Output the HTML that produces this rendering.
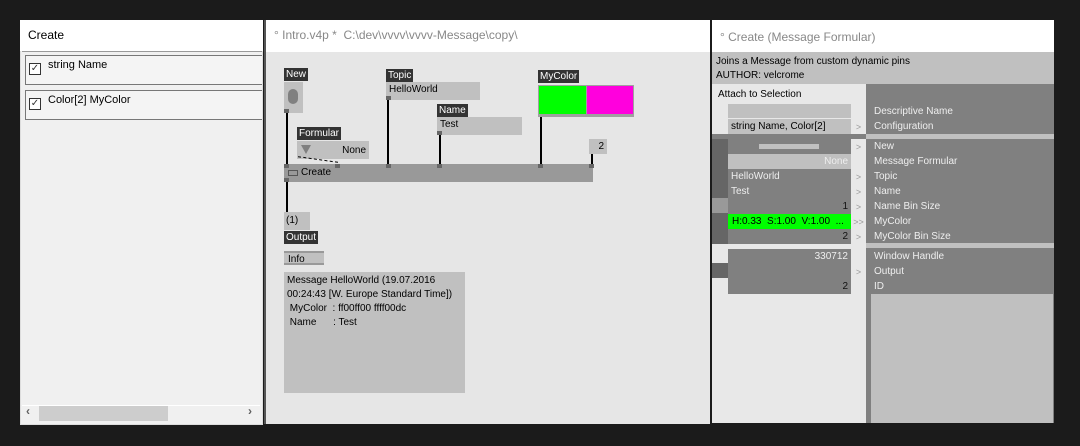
<!DOCTYPE html>
<html><head><meta charset="utf-8"><style>
*{margin:0;padding:0;box-sizing:border-box}
body{width:1080px;height:446px;background:#1b1b1b;position:relative;overflow:hidden;font-family:"Liberation Sans","DejaVu Sans",sans-serif;font-size:10px;color:#000}
.a{position:absolute}
.lbl{position:absolute;background:#333;color:#fff;font-size:10px;padding:1px 2px;height:13px;line-height:12px}
.box{position:absolute;background:#c0c0c0}
.pin{position:absolute;width:5px;height:4px;background:#666}
.wire{position:absolute;width:2px;background:#000}
.r{position:absolute;height:15px;line-height:15px;font-size:10px}
.rl{position:absolute;left:874px;color:#eee;font-size:10px;height:15px;line-height:15px}
.arr{position:absolute;left:851px;width:15px;height:14px;color:#999;font-size:9px;line-height:16px;text-align:center;background:#e8e8e8}
</style></head><body>
<!-- left panel -->
<div class="a" style="left:20px;top:20px;width:243px;height:405px;background:#f0f0f0;border:1px solid #ddd"></div>
<div class="a" style="left:20px;top:20px;width:243px;height:31px;background:#fff;font-size:12px;line-height:31px;padding-left:8px">Create</div>
<div class="a" style="left:22px;top:51px;width:240px;height:1px;background:#999"></div>
<div class="a" style="left:25px;top:55px;width:237px;height:30px;border:1px solid #777;border-right:none;background:#f4f4f4"></div>
<div class="a" style="left:25px;top:90px;width:237px;height:30px;border:1px solid #777;border-right:none;background:#f4f4f4"></div>
<div class="a" style="left:29px;top:63px;width:12px;height:12px;border:1px solid #333;background:#fff;font-size:10px;line-height:10px;text-align:center;color:#333">✓</div>
<div class="a" style="left:29px;top:98px;width:12px;height:12px;border:1px solid #333;background:#fff;font-size:10px;line-height:10px;text-align:center;color:#333">✓</div>
<div class="a" style="left:48px;top:59px;font-size:11px">string Name</div>
<div class="a" style="left:48px;top:94px;font-size:11px">Color[2] MyColor</div>
<div class="a" style="left:22px;top:405px;width:238px;height:17px;background:#f0f0f0;border-top:1px solid #fff"></div>
<div class="a" style="left:39px;top:406px;width:129px;height:15px;background:#cdcdcd"></div>
<div class="a" style="left:26px;top:404px;font-size:12px;color:#606060;font-weight:bold">‹</div>
<div class="a" style="left:248px;top:404px;font-size:12px;color:#606060;font-weight:bold">›</div>

<!-- middle panel -->
<div class="a" style="left:264px;top:20px;width:446px;height:404px;background:#e6e6e6;border-left:2px solid #555"></div>
<div class="a" style="left:266px;top:20px;width:444px;height:32px;background:#fff;color:#888;font-size:12px;line-height:30px;padding-left:8px">° Intro.v4p *&nbsp; C:\dev\vvvv\vvvv-Message\copy\</div>

<div class="lbl" style="left:284px;top:68px">New</div>
<div class="box" style="left:284px;top:82px;width:19px;height:31px"></div>
<div class="a" style="left:288px;top:89px;width:10px;height:15px;background:#808080;border-radius:5px"></div>
<div class="lbl" style="left:386px;top:69px">Topic</div>
<div class="box" style="left:386px;top:82px;width:94px;height:18px;padding:2px 3px">HelloWorld</div>
<div class="lbl" style="left:437px;top:104px">Name</div>
<div class="box" style="left:437px;top:117px;width:85px;height:18px;padding:2px 3px">Test</div>
<div class="lbl" style="left:538px;top:70px">MyColor</div>
<div class="a" style="left:538px;top:85px;width:96px;height:32px;background:#a0a0a0"></div>
<div class="a" style="left:539px;top:86px;width:47px;height:28px;background:#00ff00"></div>
<div class="a" style="left:587px;top:86px;width:46px;height:28px;background:#ff00dd"></div>
<div class="lbl" style="left:297px;top:127px">Formular</div>
<div class="box" style="left:297px;top:141px;width:72px;height:18px;text-align:right;padding:5px 3px 0 0;line-height:10px">None</div>
<div class="a" style="left:301px;top:145px;width:0;height:0;border-left:5px solid transparent;border-right:5px solid transparent;border-top:9px solid #808080"></div>
<div class="box" style="left:589px;top:139px;width:18px;height:15px;text-align:right;padding:2px 3px">2</div>
<div class="a" style="left:284px;top:164px;width:309px;height:18px;background:#999"></div>
<div class="a" style="left:288px;top:170px;width:10px;height:6px;border:1px solid #555"></div>
<div class="a" style="left:301px;top:167px;font-size:10px">Create</div>
<div class="wire" style="left:286px;top:113px;height:51px"></div>
<div class="wire" style="left:387px;top:100px;height:64px"></div>
<div class="wire" style="left:439px;top:135px;height:29px"></div>
<div class="wire" style="left:540px;top:117px;height:47px"></div>
<div class="wire" style="left:591px;top:154px;height:10px"></div>
<div class="a" style="left:298px;top:159px;width:40px;height:5px;border-top:1px dashed #000;transform:skewY(8deg)"></div>
<div class="pin" style="left:284px;top:164px"></div><div class="pin" style="left:335px;top:164px"></div>
<div class="pin" style="left:386px;top:164px"></div><div class="pin" style="left:437px;top:164px"></div>
<div class="pin" style="left:538px;top:164px"></div><div class="pin" style="left:589px;top:164px"></div>
<div class="pin" style="left:284px;top:178px"></div>
<div class="pin" style="left:284px;top:109px"></div><div class="pin" style="left:386px;top:96px"></div><div class="pin" style="left:437px;top:131px"></div>
<div class="wire" style="left:286px;top:182px;height:30px"></div>
<div class="box" style="left:284px;top:212px;width:26px;height:18px;padding:3px 2px">(1)</div>
<div class="lbl" style="left:284px;top:231px">Output</div>
<div class="box" style="left:284px;top:251px;width:40px;height:14px;padding:1px 4px;border-top:2px solid #999;border-bottom:2px solid #999">Info</div>
<div class="box" style="left:284px;top:272px;width:181px;height:121px;padding:2px 3px;line-height:14px">Message HelloWorld (19.07.2016<br>00:24:43 [W. Europe Standard Time])<br>&nbsp;MyColor&nbsp; : ff00ff00 ffff00dc<br>&nbsp;Name&nbsp;&nbsp;&nbsp;&nbsp;&nbsp; : Test</div>

<!-- right panel -->
<div class="a" style="left:712px;top:20px;width:342px;height:403px;background:#e8e8e8"></div>
<div class="a" style="left:712px;top:20px;width:342px;height:32px;background:#fff;color:#888;font-size:12px;line-height:34px;padding-left:8px">° Create (Message Formular)</div>
<div class="a" style="left:712px;top:52px;width:342px;height:32px;background:#c0c0c0;padding:3px 4px;line-height:14px">Joins a Message from custom dynamic pins<br>AUTHOR: velcrome</div>
<div class="a" style="left:866px;top:84px;width:188px;height:339px;background:#808080"></div>
<div class="a" style="left:871px;top:294px;width:182px;height:129px;background:#c0c0c0"></div>
<div class="a" style="left:718px;top:89px">Attach to Selection</div>
<div class="a" style="left:866px;top:134px;width:188px;height:5px;background:#c0c0c0"></div>
<div class="a" style="left:866px;top:243px;width:188px;height:5px;background:#c0c0c0"></div>
<div class="a" style="left:712px;top:134px;width:154px;height:5px;background:#808080"></div>

<div class="a" style="left:728px;top:104px;width:123px;height:14px;background:#c0c0c0"></div>
<div class="r" style="left:728px;top:119px;width:123px;background:#c0c0c0;padding-left:3px">string Name, Color[2]</div>
<div class="arr" style="top:119px">&gt;</div>

<div class="a" style="left:712px;top:139px;width:16px;height:105px;background:#666"></div>
<div class="a" style="left:712px;top:198px;width:16px;height:15px;background:#999"></div>
<div class="r" style="left:728px;top:139px;width:123px;background:#808080"></div>
<div class="a" style="left:759px;top:144px;width:60px;height:5px;background:#c0c0c0"></div>
<div class="arr" style="top:139px">&gt;</div>
<div class="r" style="left:728px;top:154px;width:123px;background:#c0c0c0;text-align:right;padding-right:3px;color:#eee">None</div>
<div class="r" style="left:728px;top:169px;width:123px;background:#808080;color:#eee;padding-left:3px">HelloWorld</div><div class="arr" style="top:169px">&gt;</div>
<div class="r" style="left:728px;top:184px;width:123px;background:#808080;color:#eee;padding-left:3px">Test</div><div class="arr" style="top:184px">&gt;</div>
<div class="r" style="left:728px;top:199px;width:123px;background:#808080;text-align:right;padding-right:3px;color:#111">1</div><div class="arr" style="top:199px">&gt;</div>
<div class="r" style="left:728px;top:214px;width:123px;background:#00ff00;padding-left:4px;color:#000">H:0.33&nbsp; S:1.00&nbsp; V:1.00&nbsp; ...</div><div class="arr" style="top:214px">&gt;&gt;</div>
<div class="r" style="left:728px;top:229px;width:123px;background:#808080;text-align:right;padding-right:3px;color:#111">2</div><div class="arr" style="top:229px">&gt;</div>
<div class="a" style="left:712px;top:263px;width:16px;height:15px;background:#666"></div>
<div class="r" style="left:728px;top:249px;width:123px;background:#808080;text-align:right;padding-right:3px;color:#eee">330712</div>
<div class="r" style="left:728px;top:264px;width:123px;background:#808080"></div><div class="arr" style="top:264px">&gt;</div>
<div class="r" style="left:728px;top:279px;width:123px;background:#808080;text-align:right;padding-right:3px;color:#111">2</div>

<div class="rl" style="top:104px">Descriptive Name</div>
<div class="rl" style="top:119px">Configuration</div>
<div class="rl" style="top:139px">New</div>
<div class="rl" style="top:154px">Message Formular</div>
<div class="rl" style="top:169px">Topic</div>
<div class="rl" style="top:184px">Name</div>
<div class="rl" style="top:199px">Name Bin Size</div>
<div class="rl" style="top:214px">MyColor</div>
<div class="rl" style="top:229px">MyColor Bin Size</div>
<div class="rl" style="top:249px">Window Handle</div>
<div class="rl" style="top:264px">Output</div>
<div class="rl" style="top:279px">ID</div>
</body></html>
